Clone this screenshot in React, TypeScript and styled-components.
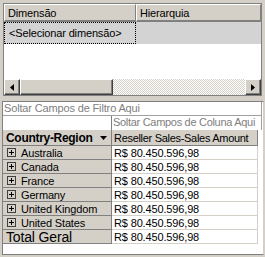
import { Fragment } from "react";
import styled, { createGlobalStyle } from "styled-components";

const GlobalStyle = createGlobalStyle`
  html, body {
    margin: 0;
    padding: 0;
    background: #d4d0c8;
  }
  body {
    font-family: "Liberation Sans", Arial, sans-serif;
    font-size: 11px;
    letter-spacing: -0.15px;
    color: #000;
  }
  * { box-sizing: border-box; }
`;

const Window = styled.div`
  width: 265px;
  height: 257px;
  overflow: hidden;
  display: flex;
  flex-direction: column;
  gap: 5px;
  padding: 3px 1px 2px 2px;
`;

// painel de dimensões (em cima)
const DimPanel = styled.div`
  height: 93px;
  margin: 0 2px 0 1px;
  border: 1px solid #808080;
  background: #fff;
  display: flex;
  flex-direction: column;
`;

const HeaderRow = styled.div`
  display: flex;
  height: 18px;
  flex: none;
`;

const HeadCell = styled.div<{ $w?: number }>`
  ${(p) => (p.$w ? `width: ${p.$w}px; flex: none;` : "flex: 1;")}
  background: #d4d0c8;
  border-top: 1px solid #fff;
  border-left: 1px solid #fff;
  border-right: 1px solid #808080;
  border-bottom: 2px solid #808080;
  padding: 2px 0 0 3px;
  line-height: 13px;
`;

const SelectRow = styled.div`
  display: flex;
  height: 22px;
  flex: none;
  background: #d3d3d3;
`;

const SelectCell = styled.div`
  width: 132px;
  border: 1px dotted #000;
  padding: 4px 0 0 4px;
  line-height: 13px;
`;

const Filler = styled.div`
  flex: 1;
`;

const HScroll = styled.div`
  height: 16px;
  flex: none;
  display: flex;
  background: repeating-conic-gradient(#d4d0c8 0 25%, #fff 0 50%) 0 0 / 2px 2px;
`;

const Raised = styled.div<{ $w?: number }>`
  width: ${(p) => p.$w ?? 16}px;
  height: 16px;
  flex: none;
  background: #d4d0c8;
  border-top: 1px solid #fff;
  border-left: 1px solid #fff;
  border-right: 1px solid #404040;
  border-bottom: 1px solid #404040;
  box-shadow: inset -1px -1px #808080;
  display: flex;
  align-items: center;
  justify-content: center;
`;

const Track = styled.div`
  flex: 1;
`;

// painel da tabela dinâmica (em baixo)
const PivotPanel = styled.div`
  flex: 1;
  border-top: 1px solid #808080;
  border-left: 1px solid #808080;
  border-right: 1px solid #d4d0c8;
  border-bottom: 1px solid #808080;
  background: #fff;
  display: flex;
  flex-direction: column;
`;

const DropZone = styled.div`
  width: 259px;
  height: 14px;
  border-right: 1px solid #a0a0a0;
  border-bottom: 1px solid #a0a0a0;
  color: #808080;
  padding-left: 1px;
  line-height: 13px;
  white-space: nowrap;
  overflow: hidden;
`;

const ColumnZone = styled.div`
  display: flex;
  width: 259px;
  height: 14px;
  border-right: 1px solid #a0a0a0;
`;

const ColumnDrop = styled.div`
  margin-left: 108px;
  flex: 1;
  border-left: 1px solid #808080;
  color: #808080;
  padding-left: 1px;
  line-height: 13px;
  white-space: nowrap;
  letter-spacing: -0.3px;
`;

const Grid = styled.div`
  display: grid;
  grid-template-columns: 109px 146px;
`;

const RowHead = styled.div<{ $h?: number; $bold?: boolean; $big?: boolean }>`
  height: ${(p) => p.$h ?? 14}px;
  background: #d4d0c8;
  border-right: 1px solid #808080;
  border-bottom: 1px solid #808080;
  display: flex;
  align-items: center;
  gap: 5px;
  padding-left: 3px;
  font-weight: ${(p) => (p.$bold ? 700 : 400)};
  font-size: ${(p) => (p.$big ? 14 : p.$bold ? 12 : 11)}px;
  letter-spacing: ${(p) => (p.$bold ? "-0.3px" : "-0.15px")};
  white-space: nowrap;
  overflow: hidden;
`;

const Label = styled.span`
  flex: 1;
`;

const ValueCell = styled.div<{ $head?: boolean; $h?: number }>`
  height: ${(p) => p.$h ?? 14}px;
  background: ${(p) => (p.$head ? "#d4d0c8" : "#fff")};
  border-right: 1px solid ${(p) => (p.$head ? "#808080" : "#d4d0c8")};
  border-bottom: 1px solid ${(p) => (p.$head ? "#808080" : "#d4d0c8")};
  padding-left: 2px;
  display: flex;
  align-items: center;
  white-space: nowrap;
  overflow: hidden;
  letter-spacing: ${(p) => (p.$head ? "-0.3px" : "-0.15px")};
`;

const PlusBox = styled.span`
  width: 9px;
  height: 9px;
  flex: none;
  margin-left: 1px;
  border: 1px solid #404040;
  position: relative;
  &::before,
  &::after {
    content: "";
    position: absolute;
    background: #000;
  }
  &::before {
    left: 1px;
    top: 3px;
    width: 5px;
    height: 1px;
  }
  &::after {
    left: 3px;
    top: 1px;
    width: 1px;
    height: 5px;
  }
`;

const Arrow = ({ dir }: { dir: "left" | "right" | "down" }) => {
  if (dir === "down")
    return (
      <svg width="7" height="4" viewBox="0 0 7 4" style={{ marginRight: 4 }}>
        <polygon points="0,0 7,0 3.5,4" fill="#000" />
      </svg>
    );
  return (
    <svg width="4" height="7" viewBox="0 0 4 7">
      <polygon points={dir === "left" ? "4,0 4,7 0,3.5" : "0,0 0,7 4,3.5"} fill="#000" />
    </svg>
  );
};

const countries = [
  "Australia",
  "Canada",
  "France",
  "Germany",
  "United Kingdom",
  "United States",
];
const amount = "R$ 80.450.596,98";

export default function App() {
  return (
    <>
      <GlobalStyle />
      <Window>
        <DimPanel>
          <HeaderRow>
            <HeadCell $w={132}>Dimensão</HeadCell>
            <HeadCell>Hierarquia</HeadCell>
          </HeaderRow>
          <SelectRow>
            <SelectCell>&lt;Selecionar dimensão&gt;</SelectCell>
          </SelectRow>
          <Filler />
          <HScroll>
            <Raised>
              <Arrow dir="left" />
            </Raised>
            <Raised $w={93} />
            <Track />
            <Raised>
              <Arrow dir="right" />
            </Raised>
          </HScroll>
        </DimPanel>

        <PivotPanel>
          <DropZone>Soltar Campos de Filtro Aqui</DropZone>
          <ColumnZone>
            <ColumnDrop>Soltar Campos de Coluna Aqui</ColumnDrop>
          </ColumnZone>
          <Grid>
            <RowHead $h={16} $bold>
              <Label>Country-Region</Label>
              <Arrow dir="down" />
            </RowHead>
            <ValueCell $head $h={16}>
              Reseller Sales-Sales Amount
            </ValueCell>
            {countries.map((c) => (
              <Fragment key={c}>
                <RowHead>
                  <PlusBox />
                  <Label>{c}</Label>
                </RowHead>
                <ValueCell>{amount}</ValueCell>
              </Fragment>
            ))}
            <RowHead $big>
              <Label>Total Geral</Label>
            </RowHead>
            <ValueCell>{amount}</ValueCell>
          </Grid>
        </PivotPanel>
      </Window>
    </>
  );
}
